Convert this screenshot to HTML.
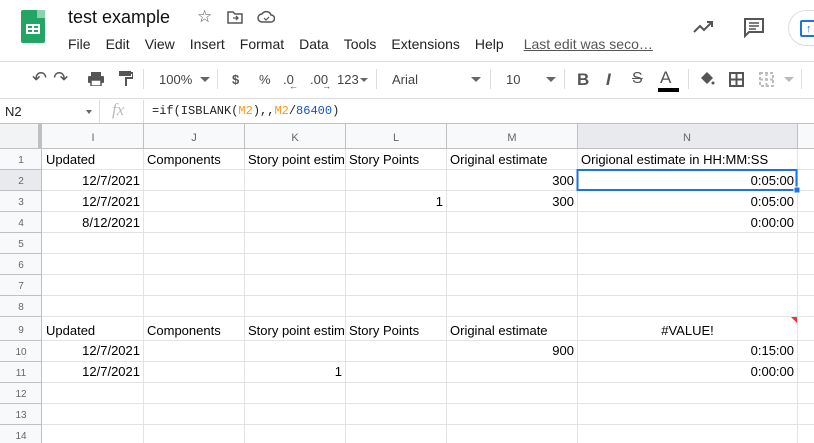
<!DOCTYPE html>
<html><head><style>
*{margin:0;padding:0;box-sizing:border-box}
body{width:814px;height:443px;overflow:hidden;background:#fff;font-family:"Liberation Sans",Arial,sans-serif;position:relative;color:#222}
.a{position:absolute}
.menu span{margin-right:15px}
.tb{color:#444;font-size:13px}
.cell{position:absolute;font-size:13px;color:#000;line-height:21px;white-space:nowrap;overflow:hidden;padding:0 3px}
.r{text-align:right}
.dd{position:absolute;width:0;height:0;border-left:5px solid transparent;border-right:5px solid transparent;border-top:5px solid #666}
</style></head><body>
<div class="a" style="left:21px;top:10px;width:24px;height:33px;background:#23a566;border-radius:2px"></div>
<div class="a" style="left:37px;top:10px;width:8px;height:8px;background:#8ed1b1"></div>
<div class="a" style="left:26px;top:24px;width:14px;height:10px;border:2px solid #fff"></div>
<div class="a" style="left:26px;top:28px;width:14px;height:2px;background:#fff"></div>
<div class="a" style="left:32px;top:24px;width:2px;height:10px;background:#fff"></div>
<div class="a" style="left:68px;top:7px;font-size:18px;color:#111">test example</div>
<div class="a" style="left:197px;top:7px;font-size:17px;color:#555">☆</div>
<svg class="a" style="left:227px;top:10px" width="16" height="14"><path d="M1 2h5l2 2h7v9H1z" fill="none" stroke="#555" stroke-width="1.5"/><path d="M6 8h5M9 6l2 2-2 2" stroke="#555" fill="none" stroke-width="1.3"/></svg>
<svg class="a" style="left:257px;top:10px" width="18" height="13"><path d="M5 12a4 4 0 0 1 0-8 5 5 0 0 1 9 1 3.5 3.5 0 0 1 0 7z" fill="none" stroke="#555" stroke-width="1.5"/><path d="M7 8l2 2 3-3" stroke="#555" fill="none" stroke-width="1.2"/></svg>
<div class="a menu" style="left:68px;top:36px;font-size:14px;color:#222"><span>File</span><span>Edit</span><span>View</span><span>Insert</span><span>Format</span><span>Data</span><span>Tools</span><span>Extensions</span><span>Help</span><span style="color:#555;text-decoration:underline;margin-left:5px">Last edit was seco…</span></div>
<svg class="a" style="left:693px;top:20px" width="22" height="14"><path d="M1 12l6-6 4 4 8-8M14 2h5v5" fill="none" stroke="#555" stroke-width="2"/></svg>
<svg class="a" style="left:744px;top:18px" width="20" height="20"><path d="M1 1h18v13H5l-4 4z" fill="none" stroke="#555" stroke-width="2"/><path d="M5 5h10M5 8h10M5 11h7" stroke="#555" stroke-width="1.5"/></svg>
<div class="a" style="left:788px;top:10px;width:60px;height:36px;border:1px solid #dadce0;border-radius:18px"></div>
<div class="a" style="left:800px;top:20px;width:18px;height:17px;border:2px solid #1a73e8;border-radius:2px"></div>
<div class="a" style="left:806px;top:23px;color:#1a73e8;font-size:11px;font-weight:bold">↑</div>
<div class="a" style="left:0;top:61px;width:814px;height:1px;background:#dadce0"></div>
<div class="a tb" style="left:32px;top:68px;font-size:18px;color:#555;letter-spacing:6px">↶↷</div>
<svg class="a" style="left:88px;top:72px" width="16" height="14"><rect x="3" y="0" width="10" height="4" fill="#555"/><rect x="0" y="4" width="16" height="7" rx="1" fill="#555"/><rect x="3" y="8" width="10" height="6" fill="#fff" stroke="#555" stroke-width="1.5"/></svg>
<svg class="a" style="left:119px;top:71px" width="14" height="16"><rect x="0" y="0" width="12" height="5" fill="#555"/><path d="M12 2h2v5H7v8" fill="none" stroke="#555" stroke-width="2"/></svg>
<div class="a" style="left:143px;top:69px;width:1px;height:20px;background:#dadce0"></div>
<div class="a tb" style="left:159px;top:72px">100%</div>
<div class="dd" style="left:200px;top:77px"></div>
<div class="a" style="left:217px;top:69px;width:1px;height:20px;background:#dadce0"></div>
<div class="a tb" style="left:232px;top:72px;font-weight:bold;color:#555">$</div>
<div class="a tb" style="left:259px;top:72px">%</div>
<div class="a tb" style="left:283px;top:72px">.0</div>
<div class="a tb" style="left:310px;top:72px">.00</div>
<div class="a tb" style="left:289px;top:81px;font-size:9px">←</div>
<div class="a tb" style="left:322px;top:81px;font-size:9px">→</div>
<div class="a tb" style="left:337px;top:72px">123</div>
<div class="dd" style="left:360px;top:78px;border-width:4px 4px 0 4px"></div>
<div class="a" style="left:376px;top:69px;width:1px;height:20px;background:#dadce0"></div>
<div class="a tb" style="left:392px;top:72px">Arial</div>
<div class="dd" style="left:471px;top:77px"></div>
<div class="a" style="left:490px;top:69px;width:1px;height:20px;background:#dadce0"></div>
<div class="a tb" style="left:506px;top:72px">10</div>
<div class="dd" style="left:546px;top:77px"></div>
<div class="a" style="left:564px;top:69px;width:1px;height:20px;background:#dadce0"></div>
<div class="a tb" style="left:577px;top:70px;font-size:17px;font-weight:bold;color:#555">B</div>
<div class="a tb" style="left:606px;top:70px;font-size:17px;font-style:italic;font-weight:bold;color:#555">I</div>
<div class="a tb" style="left:632px;top:70px;font-size:16px;text-decoration:line-through;color:#555">S</div>
<div class="a tb" style="left:660px;top:68px;font-size:17px;color:#555">A</div>
<div class="a" style="left:658px;top:88px;width:21px;height:4px;background:#000"></div>
<div class="a" style="left:688px;top:69px;width:1px;height:20px;background:#dadce0"></div>
<svg class="a" style="left:699px;top:71px" width="16" height="15"><path d="M2 7l6-6 6 6-6 6z" fill="#555"/><circle cx="14" cy="12" r="1.5" fill="#555"/></svg>
<svg class="a" style="left:729px;top:72px" width="15" height="15"><path d="M1 1h13v13H1zM7.5 1v13M1 7.5h13" fill="none" stroke="#555" stroke-width="2"/></svg>
<svg class="a" style="left:759px;top:72px" width="15" height="15"><path d="M1 1h13v13H1zM7.5 1v13M1 7.5h13" fill="none" stroke="#bbb" stroke-width="2" stroke-dasharray="3 2"/></svg>
<div class="dd" style="left:784px;top:77px;border-top-color:#bbb"></div>
<div class="a" style="left:801px;top:69px;width:1px;height:20px;background:#dadce0"></div>
<div class="a" style="left:0;top:98px;width:814px;height:1px;background:#dadce0"></div>
<div class="a" style="left:5px;top:104px;font-size:13px;color:#222">N2</div>
<div class="dd" style="left:86px;top:110px;border-width:4px 3px 0 3px"></div>
<div class="a" style="left:99px;top:100px;width:1px;height:23px;background:#dadce0"></div>
<div class="a" style="left:112px;top:100px;font-size:17px;font-style:italic;color:#bbb;font-family:'Liberation Serif',serif">fx</div>
<div class="a" style="left:143px;top:100px;width:1px;height:23px;background:#dadce0"></div>
<div class="a" style="left:152px;top:104px;font-size:12px;font-family:'Liberation Mono',monospace;color:#222">=if(ISBLANK(<span style="color:#f7981d">M2</span>),,<span style="color:#f7981d">M2</span>/<span style="color:#1155cc">86400</span>)</div>
<div class="a" style="left:0;top:123px;width:814px;height:1px;background:#c0c0c0"></div>
<svg class="a" style="left:0;top:124px" width="814" height="319">
<rect x="0" y="0" width="814" height="24" fill="#f8f9fa"/>
<rect x="0" y="0" width="42" height="319" fill="#f8f9fa"/>
<rect x="577" y="0" width="220" height="24" fill="#e8eaed"/>
<rect x="0" y="46" width="42" height="21" fill="#e8eaed"/>
<rect x="0" y="0" width="42" height="24" fill="#f1f3f4"/>
<rect x="38" y="0" width="4" height="24" fill="#c0c0c0"/>
<g stroke="#e2e3e3" stroke-width="1">
<path d="M42 45.5H814M42 66.5H814M42 87.5H814M42 108.5H814M42 129.5H814M42 150.5H814M42 171.5H814M42 192.5H814M42 216.5H814M42 237.5H814M42 258.5H814M42 279.5H814M42 300.5H814"/>
<path d="M143.5 24V319M244.5 24V319M345.5 24V319M446.5 24V319M577.5 24V319M797.5 24V319"/>
</g>
<g stroke="#c0c0c0" stroke-width="1">
<path d="M0 24.5H814M41.5 0V319M143.5 0V24M244.5 0V24M345.5 0V24M446.5 0V24M577.5 0V24M797.5 0V24"/>
<path d="M0 45.5H42M0 66.5H42M0 87.5H42M0 108.5H42M0 129.5H42M0 150.5H42M0 171.5H42M0 192.5H42M0 216.5H42M0 237.5H42M0 258.5H42M0 279.5H42M0 300.5H42"/>
</g>
<g font-family="Liberation Sans,Arial,sans-serif" font-size="11" fill="#666" text-anchor="middle">
<text x="93" y="17">I</text><text x="194" y="17">J</text><text x="295" y="17">K</text><text x="396" y="17">L</text><text x="512" y="17">M</text><text x="687" y="17">N</text>
</g>
<g font-family="Liberation Sans,Arial,sans-serif" font-size="10" fill="#666" text-anchor="middle">
<text x="21" y="39">1</text><text x="21" y="60">2</text><text x="21" y="81">3</text><text x="21" y="102">4</text><text x="21" y="123">5</text><text x="21" y="144">6</text><text x="21" y="165">7</text><text x="21" y="186">8</text><text x="21" y="209">9</text><text x="21" y="231">10</text><text x="21" y="252">11</text><text x="21" y="273">12</text><text x="21" y="294">13</text><text x="21" y="315">14</text>
</g>
<rect x="577.5" y="46" width="219" height="20" fill="none" stroke="#1a73e8" stroke-width="2"/>
<rect x="794" y="63" width="6" height="6" fill="#1a73e8" stroke="#fff" stroke-width="1"/>
<path d="M791 193h6v6z" fill="#e33"/>
</svg>
<div class="cell" style="left:43px;top:149px;width:100px">Updated</div>
<div class="cell" style="left:144px;top:149px;width:100px">Components</div>
<div class="cell" style="left:245px;top:149px;width:100px;padding-right:0">Story point estimate</div>
<div class="cell" style="left:346px;top:149px;width:100px">Story Points</div>
<div class="cell" style="left:447px;top:149px;width:130px">Original estimate</div>
<div class="cell" style="left:578px;top:149px;width:219px">Origional estimate in HH:MM:SS</div>
<div class="cell r" style="left:43px;top:170px;width:100px">12/7/2021</div>
<div class="cell r" style="left:447px;top:170px;width:130px">300</div>
<div class="cell r" style="left:578px;top:170px;width:219px">0:05:00</div>
<div class="cell r" style="left:43px;top:191px;width:100px">12/7/2021</div>
<div class="cell r" style="left:346px;top:191px;width:100px">1</div>
<div class="cell r" style="left:447px;top:191px;width:130px">300</div>
<div class="cell r" style="left:578px;top:191px;width:219px">0:05:00</div>
<div class="cell r" style="left:43px;top:212px;width:100px">8/12/2021</div>
<div class="cell r" style="left:578px;top:212px;width:219px">0:00:00</div>
<div class="cell" style="left:43px;top:320px;width:100px">Updated</div>
<div class="cell" style="left:144px;top:320px;width:100px">Components</div>
<div class="cell" style="left:245px;top:320px;width:100px;padding-right:0">Story point estimate</div>
<div class="cell" style="left:346px;top:320px;width:100px">Story Points</div>
<div class="cell" style="left:447px;top:320px;width:130px">Original estimate</div>
<div class="cell" style="left:578px;top:320px;width:219px;text-align:center">#VALUE!</div>
<div class="cell r" style="left:43px;top:340px;width:100px">12/7/2021</div>
<div class="cell r" style="left:447px;top:340px;width:130px">900</div>
<div class="cell r" style="left:578px;top:340px;width:219px">0:15:00</div>
<div class="cell r" style="left:43px;top:361px;width:100px">12/7/2021</div>
<div class="cell r" style="left:245px;top:361px;width:100px">1</div>
<div class="cell r" style="left:578px;top:361px;width:219px">0:00:00</div>
</body></html>
